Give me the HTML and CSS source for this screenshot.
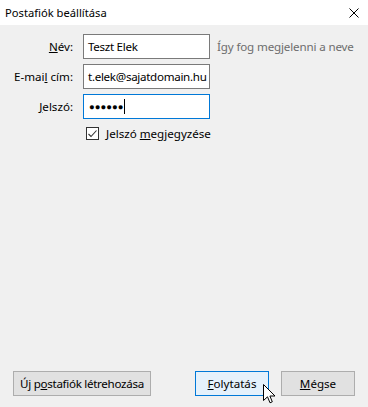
FILE: index.html
```html
<!DOCTYPE html>
<html lang="hu">
<head>
    <meta charset="UTF-8">
    <title>Postafiók beállítása</title>
    <link rel="stylesheet" href="styles.css">
</head>
<body>

<div class="window">
    <header class="titlebar">
        <span class="title">Postafiók beállítása</span>
        <span class="close">
            <svg width="10" height="10" viewBox="0 0 10 10"><path d="M0.5 0.5 L9.5 9.5 M9.5 0.5 L0.5 9.5" stroke="#000" stroke-width="1" fill="none"/></svg>
        </span>
    </header>

    <div class="form">
        <label class="label"><u>N</u>év:</label>
        <div class="input">Teszt Elek</div>
        <span class="hint">Így fog megjelenni a neve</span>

        <label class="label">E-mai<u>l</u> cím:</label>
        <div class="input">t.elek@sajatdomain.hu</div>
        <span></span>

        <label class="label"><u>J</u>elszó:</label>
        <div class="input focused"><span class="dots">●●●●●●</span><span class="caret"></span></div>
        <span></span>

        <span></span>
        <div class="check">
            <span class="box">
                <svg width="9" height="8" viewBox="0 0 9 8"><path d="M0.5 4 L3 6.5 L8.5 0.5" stroke="#333" stroke-width="1.1" fill="none"/></svg>
            </span>
            <span>Jelszó <u>m</u>egjegyzése</span>
        </div>
    </div>

    <footer class="buttons">
        <button class="btn new">Új p<u>o</u>stafiók létrehozása</button>
        <div class="right">
            <button class="btn default"><u>F</u>olytatás</button>
            <button class="btn"><u>M</u>égse</button>
        </div>
        <svg class="cursor" width="13" height="20" viewBox="0 0 13 20">
            <path d="M0.5 0.5 L0.5 16.5 L4.5 12.8 L7 18.8 L9.3 17.8 L6.9 12 L12 12 Z" fill="#fff" stroke="#000" stroke-width="1" stroke-linejoin="miter"/>
        </svg>
    </footer>
</div>

</body>
</html>
```

FILE: styles.css
```css
body {
    margin: 0;
    background: #f0f0f0;
    font-family: "Noto Sans", "Open Sans", sans-serif;
    font-size: 11.6px;
    color: #000;
}
.window {
    width: 368px;
    height: 407px;
    display: flex;
    flex-direction: column;
    position: relative;
}
.titlebar {
    height: 25px;
    background: #fff;
    display: flex;
    align-items: center;
    justify-content: space-between;
    padding: 0 9px 0 5px;
}
.title {
    font-size: 11.2px;
}
.close {
    display: flex;
    margin-top: 1px;
}
.form {
    display: grid;
    grid-template-columns: 73px 127px auto;
    column-gap: 10px;
    row-gap: 5px;
    margin-top: 9px;
    align-items: center;
}
.label {
    text-align: right;
    white-space: nowrap;
}
.input {
    height: 25px;
    box-sizing: border-box;
    background: #fff;
    border: 1px solid #7a7a7a;
    padding: 0 0 0 4px;
    display: flex;
    align-items: center;
    white-space: nowrap;
    overflow: hidden;
    letter-spacing: -0.3px;
}
.input.focused {
    border-color: #0078d7;
}
.dots {
    font-size: 9.5px;
    letter-spacing: 0;
    margin-left: 1px;
}
.caret {
    width: 1px;
    height: 15px;
    background: #000;
    margin-left: 1px;
}
.hint {
    color: #6d6d6d;
    margin-left: -3px;
    white-space: nowrap;
    letter-spacing: -0.15px;
}
.check {
    grid-column: span 2;
    display: flex;
    align-items: center;
    gap: 7px;
    margin-top: 2px;
    padding-left: 3px;
    white-space: nowrap;
}
.box {
    width: 11px;
    height: 11px;
    border: 1px solid #333;
    background: #fff;
    display: flex;
    align-items: center;
    justify-content: center;
}
.buttons {
    margin-top: auto;
    display: flex;
    justify-content: space-between;
    padding: 0 13px 11px 13px;
    position: relative;
}
.right {
    display: flex;
    gap: 12px;
}
.btn {
    font-family: inherit;
    font-size: 11.6px;
    height: 25px;
    background: #e1e1e1;
    border: 1px solid #adadad;
    padding: 0;
    color: #000;
    white-space: nowrap;
}
.btn.new {
    width: 138px;
    letter-spacing: -0.3px;
}
.right .btn {
    width: 74px;
}
.btn.default {
    background: #e5f1fb;
    border-color: #0078d7;
}
.cursor {
    position: absolute;
    left: 263px;
    top: 13px;
}
```
